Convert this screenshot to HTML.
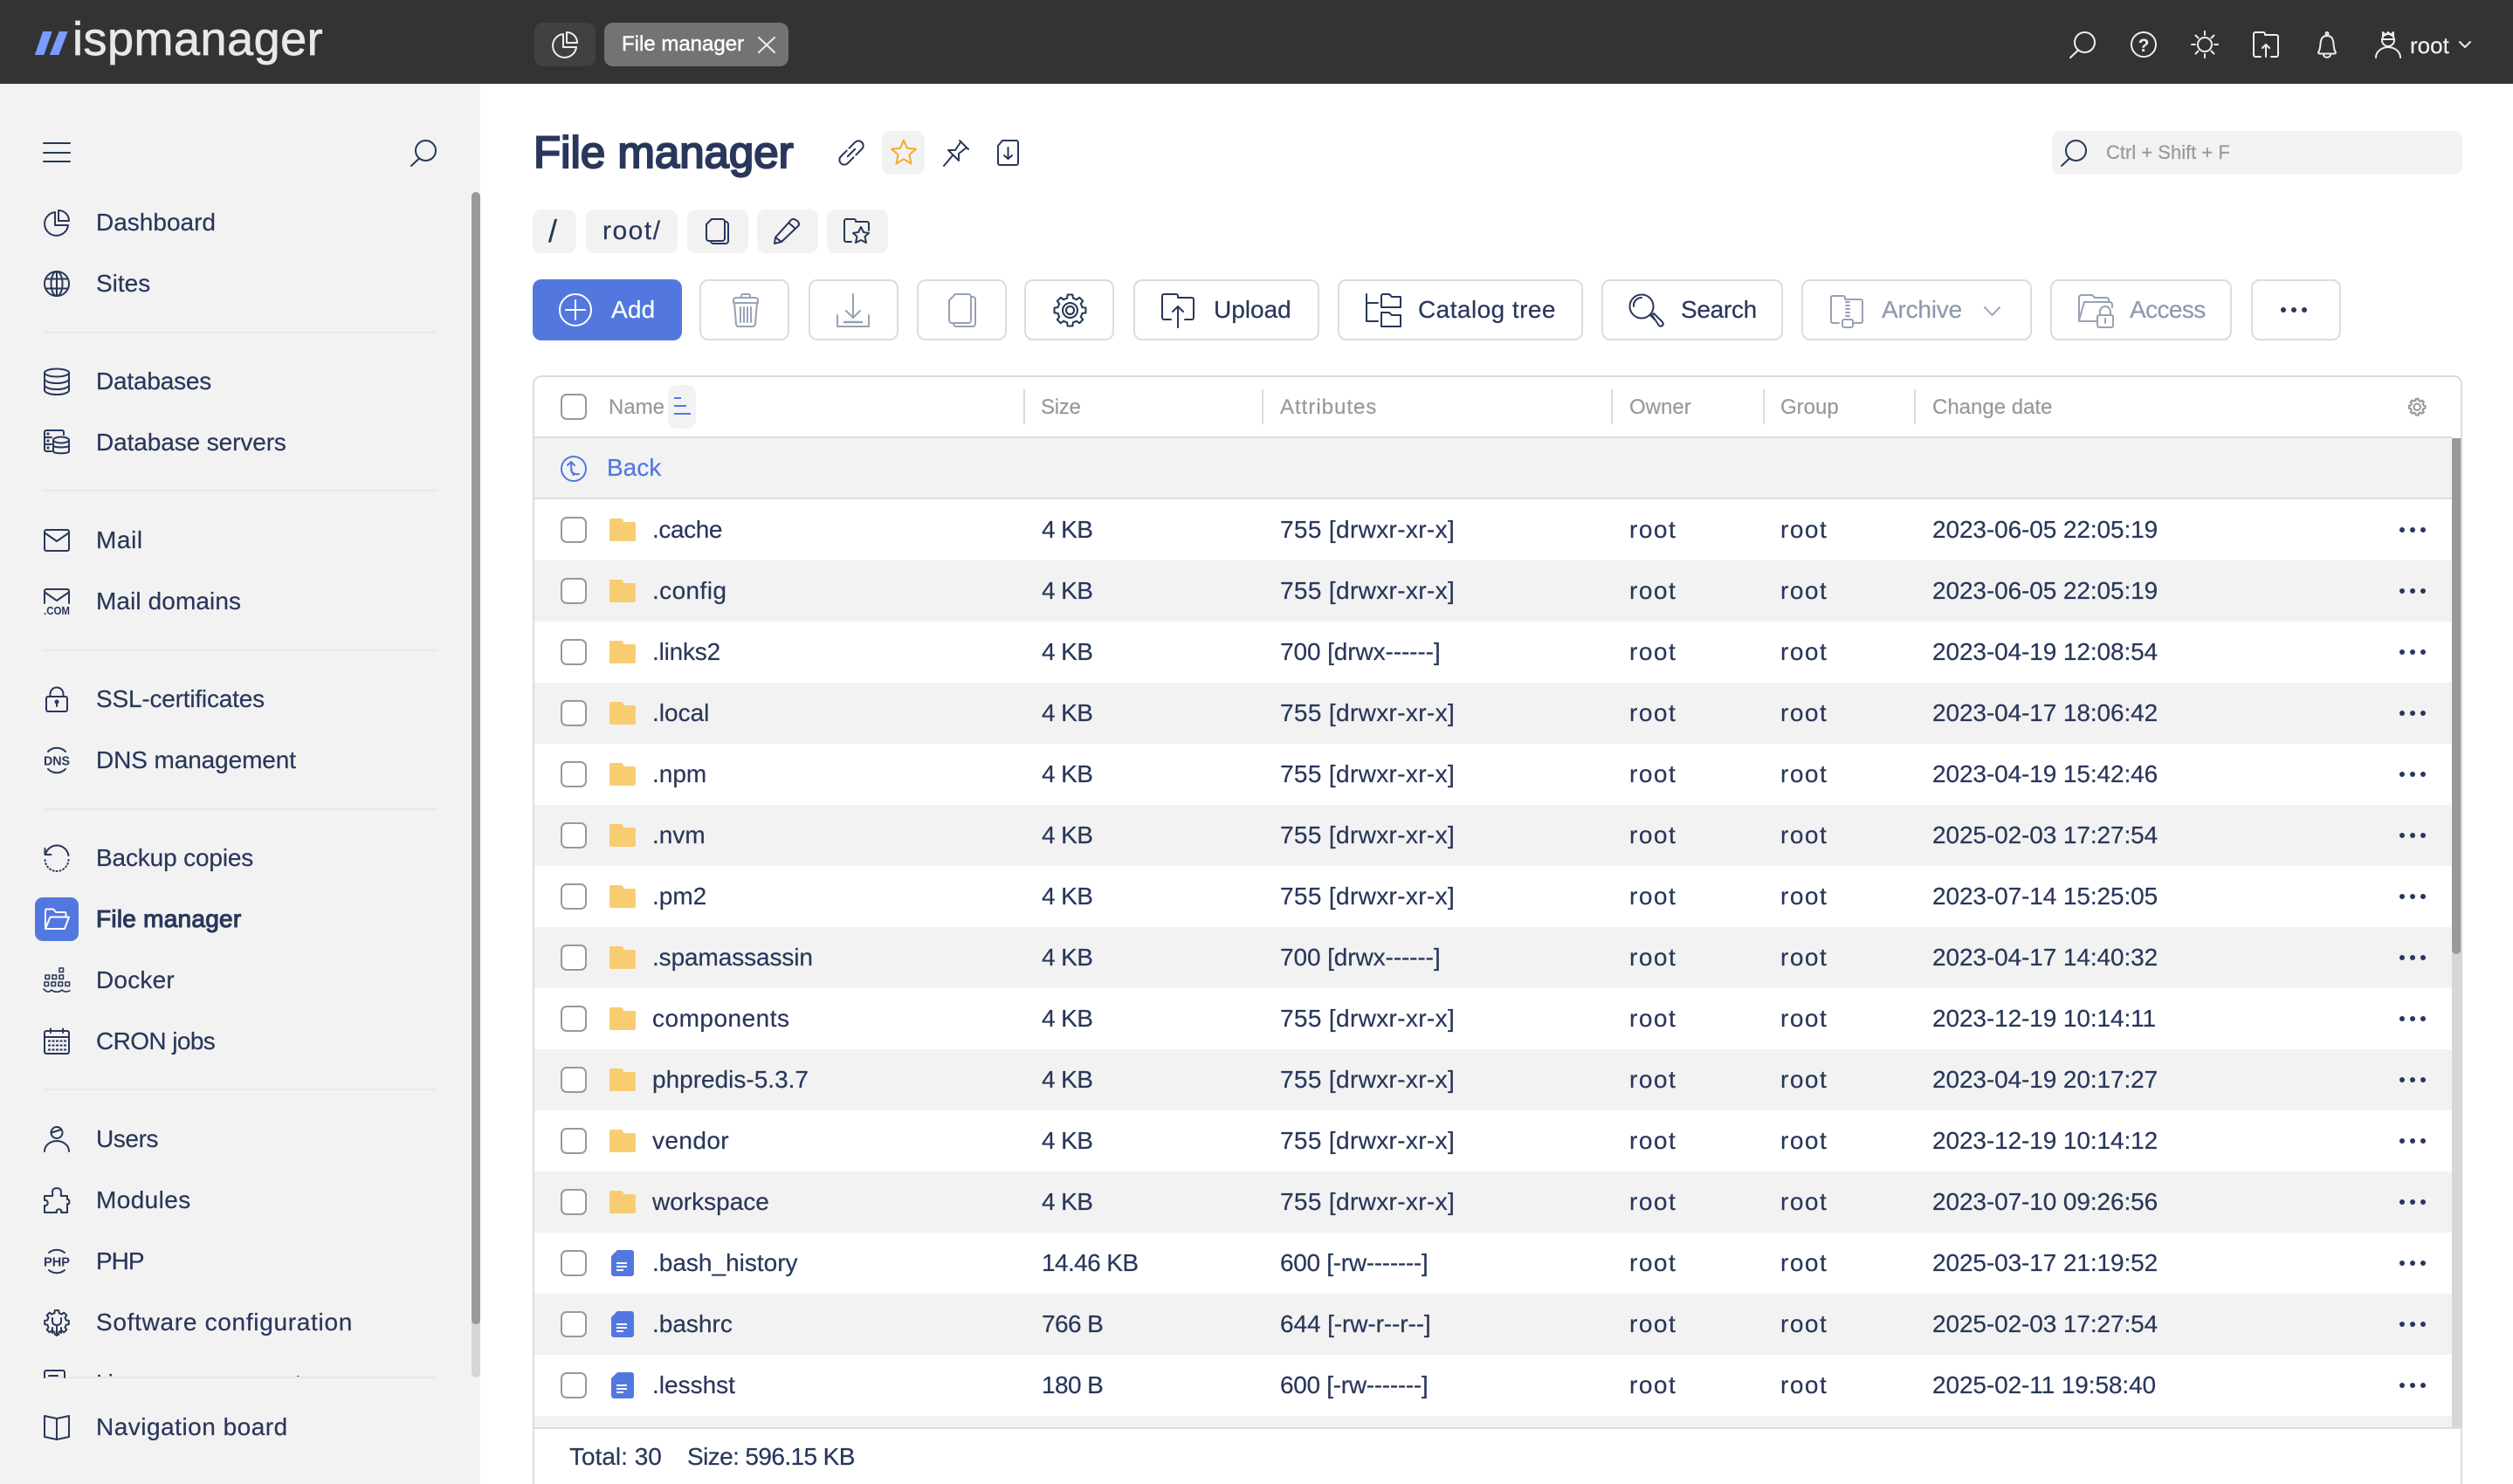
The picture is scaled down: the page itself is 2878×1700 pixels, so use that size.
<!DOCTYPE html>
<html lang="en">
<head>
<meta charset="utf-8">
<title>File manager - ispmanager</title>
<style>
html,body{margin:0;padding:0;width:2878px;height:1700px;overflow:hidden;background:#fff;font-family:"Liberation Sans",sans-serif;color:#29375b;font-size:28px}
body{position:relative;-webkit-text-stroke:.2px}
div{box-sizing:border-box}
.a{position:absolute}
.t{position:absolute;white-space:nowrap;line-height:40px;height:40px}
.tb{position:absolute;top:320px;height:70px;border:2px solid #dcdcdc;border-radius:10px;background:#fff}
.cr{position:absolute;top:240px;height:50px;background:#f2f2f2;border-radius:10px}
.dv{position:absolute;left:50px;width:450px;height:2px;background:#e8e8e8}
.sep{position:absolute;top:446px;width:2px;height:40px;background:#dcdcdc}
.th{font-size:24px;color:#999;top:447px}
.dis{color:#8f99ae}
.r{position:absolute;left:612px;width:2196px;height:70px}
.g{background:#f2f2f2}
.r span{position:absolute;top:15px;line-height:40px;white-space:nowrap}
.r span:nth-child(1){left:135px}
.r span:nth-child(2){left:581px;letter-spacing:-.6px}
.r span:nth-child(3){left:854px;letter-spacing:.35px}
.r span:nth-child(3).n{letter-spacing:-.1px}
.r span:nth-child(3).m{letter-spacing:-.3px}
.r span:nth-child(4){left:1254px;letter-spacing:1.5px}
.r span:nth-child(5){left:1427px;letter-spacing:1.5px}
.r span:nth-child(6){left:1601px;letter-spacing:-.1px}
#ic{position:absolute;left:0;top:0;fill:none;stroke:#29375b;stroke-width:2;stroke-linecap:round;stroke-linejoin:round}
#ic text{font-family:"Liberation Sans",sans-serif;stroke:none;fill:#29375b;font-weight:700;-webkit-text-stroke:0}
</style>
</head>
<body>
<!-- top bar -->
<div class="a" style="left:0;top:0;width:2878px;height:96px;background:#333"></div>
<div class="a" style="left:612px;top:26px;width:70px;height:50px;background:#414141;border-radius:10px"></div>
<div class="a" style="left:692px;top:26px;width:211px;height:50px;background:#737373;border-radius:10px"></div>

<!-- sidebar -->
<div class="a" style="left:0;top:96px;width:550px;height:1604px;background:#f2f2f2"></div>
<div class="a" style="left:540px;top:220px;width:10px;height:1358px;background:#d6d6d6;border-radius:5px"></div>
<div class="a" style="left:540px;top:220px;width:10px;height:1297px;background:#999;border-radius:5px"></div>
<div class="dv" style="top:380px"></div>
<div class="dv" style="top:561px"></div>
<div class="dv" style="top:744px"></div>
<div class="dv" style="top:926px"></div>
<div class="dv" style="top:1247px"></div>
<div class="dv" style="top:1577px"></div>
<div class="a" style="left:40px;top:1028px;width:50px;height:50px;background:#5278e0;border-radius:9px"></div>

<!-- title row -->
<div class="a" style="left:1010px;top:150px;width:49px;height:50px;background:#f2f2f2;border-radius:10px"></div>
<div class="a" style="left:2350px;top:150px;width:470px;height:50px;background:#f2f2f2;border-radius:10px"></div>

<!-- breadcrumb -->
<div class="cr" style="left:610px;width:50px"></div>
<div class="cr" style="left:671px;width:105px"></div>
<div class="cr" style="left:787px;width:70px"></div>
<div class="cr" style="left:867px;width:70px"></div>
<div class="cr" style="left:947px;width:70px"></div>

<!-- toolbar -->
<div class="a" style="left:610px;top:320px;width:171px;height:70px;background:#5278e0;border-radius:10px"></div>
<div class="tb" style="left:801px;width:103px"></div>
<div class="tb" style="left:926px;width:103px"></div>
<div class="tb" style="left:1050px;width:103px"></div>
<div class="tb" style="left:1173px;width:103px"></div>
<div class="tb" style="left:1298px;width:213px"></div>
<div class="tb" style="left:1532px;width:281px"></div>
<div class="tb" style="left:1834px;width:208px"></div>
<div class="tb" style="left:2063px;width:264px"></div>
<div class="tb" style="left:2348px;width:208px"></div>
<div class="tb" style="left:2578px;width:103px"></div>

<!-- table -->
<div class="a" style="left:610px;top:430px;width:2210px;height:1270px;border:2px solid #dcdcdc;border-bottom:0;border-radius:10px 10px 0 0;background:#fff"></div>
<div class="a" style="left:765px;top:441px;width:32px;height:50px;background:#f2f2f2;border-radius:10px"></div>
<div class="sep" style="left:1172px"></div>
<div class="sep" style="left:1445px"></div>
<div class="sep" style="left:1845px"></div>
<div class="sep" style="left:2019px"></div>
<div class="sep" style="left:2192px"></div>
<div class="a" style="left:612px;top:500px;width:2196px;height:2px;background:#dcdcdc"></div>
<div class="a g" style="left:612px;top:502px;width:2196px;height:68px"></div>
<div class="a" style="left:612px;top:570px;width:2196px;height:2px;background:#dcdcdc"></div>

<div class="r" style="top:572px"><span style="letter-spacing:-.4px">.cache</span><span>4 KB</span><span>755 [drwxr-xr-x]</span><span>root</span><span>root</span><span>2023-06-05 22:05:19</span></div>
<div class="r g" style="top:642px"><span style="letter-spacing:.4px">.config</span><span>4 KB</span><span>755 [drwxr-xr-x]</span><span>root</span><span>root</span><span>2023-06-05 22:05:19</span></div>
<div class="r" style="top:712px"><span style="letter-spacing:-.2px">.links2</span><span>4 KB</span><span class="n">700 [drwx------]</span><span>root</span><span>root</span><span>2023-04-19 12:08:54</span></div>
<div class="r g" style="top:782px"><span>.local</span><span>4 KB</span><span>755 [drwxr-xr-x]</span><span>root</span><span>root</span><span>2023-04-17 18:06:42</span></div>
<div class="r" style="top:852px"><span>.npm</span><span>4 KB</span><span>755 [drwxr-xr-x]</span><span>root</span><span>root</span><span>2023-04-19 15:42:46</span></div>
<div class="r g" style="top:922px"><span>.nvm</span><span>4 KB</span><span>755 [drwxr-xr-x]</span><span>root</span><span>root</span><span>2025-02-03 17:27:54</span></div>
<div class="r" style="top:992px"><span>.pm2</span><span>4 KB</span><span>755 [drwxr-xr-x]</span><span>root</span><span>root</span><span>2023-07-14 15:25:05</span></div>
<div class="r g" style="top:1062px"><span style="letter-spacing:-.1px">.spamassassin</span><span>4 KB</span><span class="n">700 [drwx------]</span><span>root</span><span>root</span><span>2023-04-17 14:40:32</span></div>
<div class="r" style="top:1132px"><span style="letter-spacing:.5px">components</span><span>4 KB</span><span>755 [drwxr-xr-x]</span><span>root</span><span>root</span><span>2023-12-19 10:14:11</span></div>
<div class="r g" style="top:1202px"><span>phpredis-5.3.7</span><span>4 KB</span><span>755 [drwxr-xr-x]</span><span>root</span><span>root</span><span>2023-04-19 20:17:27</span></div>
<div class="r" style="top:1272px"><span style="letter-spacing:.4px">vendor</span><span>4 KB</span><span>755 [drwxr-xr-x]</span><span>root</span><span>root</span><span>2023-12-19 10:14:12</span></div>
<div class="r g" style="top:1342px"><span>workspace</span><span>4 KB</span><span>755 [drwxr-xr-x]</span><span>root</span><span>root</span><span>2023-07-10 09:26:56</span></div>
<div class="r" style="top:1412px"><span>.bash_history</span><span>14.46 KB</span><span class="m">600 [-rw-------]</span><span>root</span><span>root</span><span>2025-03-17 21:19:52</span></div>
<div class="r g" style="top:1482px"><span>.bashrc</span><span>766 B</span><span class="n">644 [-rw-r--r--]</span><span>root</span><span>root</span><span>2025-02-03 17:27:54</span></div>
<div class="r" style="top:1552px"><span>.lesshst</span><span>180 B</span><span class="m">600 [-rw-------]</span><span>root</span><span>root</span><span>2025-02-11 19:58:40</span></div>
<div class="a g" style="left:612px;top:1622px;width:2196px;height:13px"></div>
<div class="a" style="left:612px;top:1635px;width:2206px;height:2px;background:#dcdcdc"></div>
<div class="a" style="left:2808px;top:502px;width:12px;height:1133px;background:#d6d6d6"></div>
<div class="a" style="left:2808px;top:502px;width:10px;height:591px;background:#999;border-radius:0 0 5px 5px"></div>

<!-- all icons -->
<svg id="ic" width="2878" height="1700" viewBox="0 0 2878 1700" xmlns="http://www.w3.org/2000/svg">
<defs>
<path id="th" d="M12.34 4.33L12.81 1.17H17.19L17.66 4.33A11 11 0 0 1 20.67 5.57"/>
<g id="gear"><use href="#th"/><use href="#th" transform="rotate(45 15 15)"/><use href="#th" transform="rotate(90 15 15)"/><use href="#th" transform="rotate(135 15 15)"/><use href="#th" transform="rotate(180 15 15)"/><use href="#th" transform="rotate(225 15 15)"/><use href="#th" transform="rotate(270 15 15)"/><use href="#th" transform="rotate(315 15 15)"/></g>
<rect id="cb" x="1" y="1" width="28" height="28" rx="6" fill="#fff" stroke="#999" stroke-width="2"/>
<path id="fo" fill="#f8cd72" stroke="none" d="M2 0H13a3 3 0 0 1 3 3V4H28a2 2 0 0 1 2 2V24a2 2 0 0 1-2 2H2a2 2 0 0 1-2-2V2A2 2 0 0 1 2 0Z"/>
<g id="fi"><path fill="#5278e0" stroke="none" d="M7 0H23a3 3 0 0 1 3 3V27a3 3 0 0 1-3 3H3a3 3 0 0 1-3-3V7Z"/><path stroke="#fff" stroke-width="2" stroke-linecap="butt" d="M6 15H18M6 19H18M6 23H14"/></g>
<g id="dt" fill="#29375b" stroke="none"><circle cx="3" cy="0" r="3"/><circle cx="15" cy="0" r="3"/><circle cx="27" cy="0" r="3"/></g>
<g id="mg"><circle cx="17.5" cy="12.5" r="11.5"/><path d="M10 21.5L1 30"/></g>
<g id="pie"><path d="M13 3A13.5 13.5 0 1 0 28 18H13Z"/><path d="M17 1V13H29A12 12 0 0 0 17 1Z"/></g>
</defs>

<!-- logo -->
<path fill="#7b9cff" stroke="#7b9cff" stroke-width="1" d="M49.500 36.500H59L50 62.500H40.500ZM68 36.500H77L67 62.500H57.500Z"/>

<!-- top tabs / top-right icons -->
<use href="#pie" x="632" y="36" stroke="#eee"/>
<path stroke="#eee" d="M869 43L887 60M887 43L869 60"/>
<use href="#mg" x="2370" y="36" stroke="#eee"/>
<g transform="translate(2440 36)" stroke="#eee"><circle cx="15" cy="15" r="14"/><text x="15" y="23" font-size="21" text-anchor="middle" style="fill:#eee">?</text></g>
<g transform="translate(2510 36)" stroke="#eee"><circle cx="15" cy="15" r="8"/><path d="M15 0V4M15 26V30M0 15H4M26 15H30M4.500 4.500L7.500 7.500M22.500 22.500L25.500 25.500M25.500 4.500L22.500 7.500M7.500 22.500L4.500 25.500"/></g>
<g transform="translate(2580 36)" stroke="#eee"><path d="M9 29H3a2 2 0 0 1-2-2V3a2 2 0 0 1 2-2H12a2 2 0 0 1 2 2V4H27a2 2 0 0 1 2 2V27a2 2 0 0 1-2 2H21"/><path d="M15 29V15M11 19L15 15L19 19"/></g>
<g transform="translate(2654 36)" stroke="#eee"><path d="M1 24C4 20 3 14 4 11C5 6 8 5 11 5C14 5 17 6 18 11C19 14 18 20 21 24C21 25 20 25.500 19 25.500H3C2 25.500 1 25 1 24Z"/><circle cx="11" cy="2.500" r="1.500"/><path d="M7 26C7 31 15 31 15 26"/></g>
<g transform="translate(2720 36)" stroke="#eee"><path d="M1 30A14 12 0 0 1 29 30"/><circle cx="15" cy="10" r="7"/><path d="M8 9H22M9 6L9 1L12 4L15 1L18 4L21 1L21 6"/></g>
<path stroke="#eee" d="M2817 48L2823 54L2829 48"/>

<!-- sidebar controls -->
<path d="M50 164H80M50 175H80M50 185H80"/>
<use href="#mg" x="470" y="160"/>

<!-- nav icons -->
<use href="#pie" x="50" y="240"/>
<g transform="translate(50 310)"><circle cx="15" cy="15" r="14"/><ellipse cx="15" cy="15" rx="6.500" ry="14"/><path d="M15 1V29M2.500 9.500H27.500M2.500 20.500H27.500"/></g>
<g transform="translate(50 422)"><ellipse cx="15" cy="5" rx="14" ry="4.500"/><path d="M1 5V25C1 28 8 30 15 30S29 28 29 25V5M1 12C1 15 8 17 15 17S29 15 29 12M1 19C1 22 8 24 15 24S29 22 29 19"/></g>
<g transform="translate(50 492)"><path d="M9 25H3a2 2 0 0 1-2-2V3a2 2 0 0 1 2-2H21a2 2 0 0 1 2 2V6M1 9H9M1 17H9"/><circle cx="5" cy="5" r=".6"/><circle cx="5" cy="13" r=".6"/><circle cx="5" cy="21" r=".6"/><ellipse cx="20" cy="12" rx="9" ry="3.500"/><path d="M11 12V25C11 28 29 28 29 25V12M11 18.500C11 21 29 21 29 18.500"/></g>
<g transform="translate(50 606)"><rect x="1" y="1" width="28" height="24" rx="2"/><path d="M2 5L15 14L28 5"/></g>
<g transform="translate(50 674)"><path d="M1 17V3a2 2 0 0 1 2-2H27a2 2 0 0 1 2 2V17M2 5L15 14L28 5"/><text x="0" y="30" font-size="13" textLength="30" lengthAdjust="spacingAndGlyphs">.COM</text></g>
<g transform="translate(50 786)"><rect x="3" y="12" width="24" height="17" rx="2"/><path d="M7.500 12V9a7.500 7.500 0 0 1 15 0V12"/><circle cx="15" cy="18" r="1.500" fill="#29375b"/><path d="M15 19V23"/></g>
<g transform="translate(50 856)"><path d="M5 5A14 14 0 0 1 25 5M5 25A14 14 0 0 0 25 25"/><text x="0" y="20.500" font-size="15" textLength="30" lengthAdjust="spacingAndGlyphs">DNS</text></g>
<g transform="translate(50 968)"><path d="M2 11A13.500 13.500 0 0 1 28.500 12"/><path stroke-dasharray="1 3" d="M28.500 17A13.500 13.500 0 0 1 1.500 16"/><path d="M1.500 4V11H8.500"/></g>
<g transform="translate(50 1038)" stroke="#fff"><path d="M2 24V5a1.500 1.500 0 0 1 1.500-1.500H11L14 7H24a1.500 1.500 0 0 1 1.500 1.500V12"/><path d="M2 26L7.500 12.500H29L24 26Z"/></g>
<g transform="translate(50 1108)" stroke-width="1.600"><rect x="18" y="1" width="4.500" height="4.500"/><rect x="2" y="9" width="4.500" height="4.500"/><rect x="10" y="9" width="4.500" height="4.500"/><rect x="18" y="9" width="4.500" height="4.500"/><rect x="1" y="17" width="4.500" height="4.500"/><rect x="9" y="17" width="4.500" height="4.500"/><rect x="17" y="17" width="4.500" height="4.500"/><rect x="25" y="17" width="4.500" height="4.500"/><path d="M0 25C4 29 6 29 9 26C12 29 18 29 21 26C24 29 27 28 30 27"/></g>
<g transform="translate(50 1178)"><rect x="1" y="3" width="28" height="26" rx="2"/><path d="M1 10H29M8 0.500V5M22 0.500V5"/><path stroke-dasharray="3 1.500" stroke-linecap="butt" d="M5 14.500H26M5 19.500H26M5 24.500H26"/></g>
<g transform="translate(50 1290)"><circle cx="15" cy="7.500" r="6.500"/><path d="M9 7.500L20 4M1 29A14 12 0 0 1 29 29"/></g>
<g transform="translate(50 1360)"><path d="M1 10H10C11 8 9 7 10.500 3C12 0.500 18 0.500 19.500 3C21 7 19 8 20 10H27V14C30 13 30.500 21 27 19V29H20C22 24 13 24 15 29H1V21C6 22 6 14 1 15Z"/></g>
<g transform="translate(50 1430)"><path d="M6 5A14 14 0 0 1 24 5M6 25A14 14 0 0 0 24 25"/><text x="0" y="20.500" font-size="14.500" textLength="30" lengthAdjust="spacingAndGlyphs">PHP</text></g>
<g transform="translate(50 1500)"><use href="#gear"/><path d="M10 10V14C10 17 13 18 15 18C17 18 20 17 20 14V10M15 18V30M10 21V27M20 21V27"/></g>
<path d="M51 1578V1572a2 2 0 0 1 2-2H72a2 2 0 0 1 2 2V1578M56 1576H66"/>
<g transform="translate(50 1620)"><path d="M1 2L15 5L29 2V26L15 29L1 26ZM15 5V29"/></g>

<!-- title icons -->
<g transform="translate(960 160)"><g transform="rotate(-45 15 15)"><path d="M13 9.500H3.500a5.500 5.500 0 0 0 0 11H13"/><path d="M17 9.500H26.500a5.500 5.500 0 0 1 0 11H17"/><path d="M9 15H21"/></g></g>
<path stroke="#f5a92e" d="M1035 160.500L1039 169.800L1049 170.800L1041.400 177.300L1043.600 187.500L1035 182.200L1026.400 187.500L1028.600 177.300L1021 170.800L1031 169.800Z"/>
<g transform="translate(1080 160)"><path d="M1 30L11 18M19 1L29 11M20 3L14 12L6 12L18 24L18 16L27 9"/></g>
<g transform="translate(1142 160)"><path d="M6 1H22a2 2 0 0 1 2 2V27a2 2 0 0 1-2 2H3a2 2 0 0 1-2-2V7ZM12.500 9V22M8 18L12.500 22L17 18"/></g>
<use href="#mg" x="2360" y="160"/>

<!-- breadcrumb icons -->
<g transform="translate(808 250)"><path d="M7 1H19a3 3 0 0 1 3 3V23a3 3 0 0 1-3 3H4a3 3 0 0 1-3-3V7Z"/><path d="M22 4H23a3 3 0 0 1 3 3V26a3 3 0 0 1-3 3H9a3 3 0 0 1-3-3"/></g>
<g transform="translate(886 250)"><path d="M2 22L20 2C22 0 24 1 27 3C29 5 30 7 28 9L9 27L1 29ZM2 22L9 27M17 5L25 12"/></g>
<g transform="translate(966 250)"><path d="M9 27H3a2 2 0 0 1-2-2V3a2 2 0 0 1 2-2H12a2 2 0 0 1 2 2V4H27a2 2 0 0 1 2 2V14"/><path d="M20 10L23 16L29 17L24.500 21L26 28L20 25L14 28L15.500 21L11 17L17 16Z"/></g>

<!-- toolbar icons -->
<g stroke="#fff" transform="translate(640 336)"><circle cx="19" cy="19" r="18"/><path d="M19 8V30M8 19H30"/></g>
<g stroke="#97a1b5" transform="translate(838 336)"><path d="M2 11V8a3 3 0 0 1 3-3H27a3 3 0 0 1 3 3V11ZM11 5V3a2 2 0 0 1 2-2H19a2 2 0 0 1 2 2V5M3 11L5 35a3 3 0 0 0 3 3H24a3 3 0 0 0 3-3L29 11M10 16V33M14 16V33M18 16V33M22 16V33"/></g>
<g stroke="#97a1b5" transform="translate(958 336)"><path d="M19 1V28M11 20L19 28L27 20M1 25V38H37V25"/><path d="M9 33H29" stroke-width="2.500"/></g>
<g stroke="#97a1b5" transform="translate(1086 336)"><path d="M8 1H23a3 3 0 0 1 3 3V31a3 3 0 0 1-3 3H4a3 3 0 0 1-3-3V8Z"/><path d="M26 4H28a3 3 0 0 1 3 3V35a3 3 0 0 1-3 3H9a3 3 0 0 1-3-3"/></g>
<g transform="translate(1206 336) scale(1.300)" stroke-width="1.600"><use href="#gear"/><circle cx="15" cy="15" r="6.500"/><circle cx="15" cy="15" r="3.500"/></g>
<g transform="translate(1330 336)"><path d="M11 30H3a2 2 0 0 1-2-2V3a2 2 0 0 1 2-2H17a2 2 0 0 1 2 2V5H35a2 2 0 0 1 2 2V28a2 2 0 0 1-2 2H27"/><path d="M19 39V15M13 21L19 15L25 21"/></g>
<g transform="translate(1564 336)"><path d="M1 1V32H14M1 11H14"/><path d="M18 15V3a2 2 0 0 1 2-2H27l3 3H40V16H18ZM18 38V22H27l3 3H40V38Z" stroke-width="2"/></g>
<g transform="translate(1866 336)"><circle cx="14" cy="15" r="13.500"/><path d="M5 15A9 9 0 0 1 14 5"/><path d="M24 25L29 30M26 25L28 23L38 33C40 36 37 39 34 37Z"/></g>
<g stroke="#97a1b5" transform="translate(2096 338)"><path d="M10 32H3a2 2 0 0 1-2-2V3a2 2 0 0 1 2-2H15a2 2 0 0 1 2 2V5H35a2 2 0 0 1 2 2V30a2 2 0 0 1-2 2H26"/><path d="M18 8H22M18 12H22M18 16H22M18 20H22M18 24H22"/><rect x="14" y="28" width="12" height="9" rx="2"/></g>
<path stroke="#97a1b5" d="M2273 352L2281.500 361L2290 352"/>
<g stroke="#97a1b5" transform="translate(2380 336)"><path d="M1 30V5a3 3 0 0 1 3-3H16l3 3H32a3 3 0 0 1 3 3V9M7 10H36a3 3 0 0 1 3 3V16M1 31L7 10M1 32H20"/><rect x="22" y="25" width="18" height="14" rx="2"/><path d="M25 25V21a6 6 0 0 1 12 0V25M31 29V34"/></g>
<use href="#dt" x="2612" y="355"/>

<!-- table header -->
<use href="#cb" x="642" y="451"/>
<path stroke="#5278e0" stroke-linecap="butt" d="M772 456H780M772 465H786M772 474H791"/>
<g transform="translate(2758 456) scale(.68)" stroke="#999" stroke-width="3"><use href="#gear"/><circle cx="15" cy="15" r="5.500"/></g>
<g stroke="#5278e0" transform="translate(642 522)"><circle cx="15" cy="15" r="14"/><path d="M15 22C13 20 12 17 12 7M8 11L12 7L16 11M12 15C12 20 17 22 21 21"/></g>

<!-- rows -->
<use href="#cb" x="642" y="592"/><use href="#fo" x="698" y="594"/><use href="#dt" x="2748" y="607"/>
<use href="#cb" x="642" y="662"/><use href="#fo" x="698" y="664"/><use href="#dt" x="2748" y="677"/>
<use href="#cb" x="642" y="732"/><use href="#fo" x="698" y="734"/><use href="#dt" x="2748" y="747"/>
<use href="#cb" x="642" y="802"/><use href="#fo" x="698" y="804"/><use href="#dt" x="2748" y="817"/>
<use href="#cb" x="642" y="872"/><use href="#fo" x="698" y="874"/><use href="#dt" x="2748" y="887"/>
<use href="#cb" x="642" y="942"/><use href="#fo" x="698" y="944"/><use href="#dt" x="2748" y="957"/>
<use href="#cb" x="642" y="1012"/><use href="#fo" x="698" y="1014"/><use href="#dt" x="2748" y="1027"/>
<use href="#cb" x="642" y="1082"/><use href="#fo" x="698" y="1084"/><use href="#dt" x="2748" y="1097"/>
<use href="#cb" x="642" y="1152"/><use href="#fo" x="698" y="1154"/><use href="#dt" x="2748" y="1167"/>
<use href="#cb" x="642" y="1222"/><use href="#fo" x="698" y="1224"/><use href="#dt" x="2748" y="1237"/>
<use href="#cb" x="642" y="1292"/><use href="#fo" x="698" y="1294"/><use href="#dt" x="2748" y="1307"/>
<use href="#cb" x="642" y="1362"/><use href="#fo" x="698" y="1364"/><use href="#dt" x="2748" y="1377"/>
<use href="#cb" x="642" y="1432"/><use href="#fi" x="700" y="1432"/><use href="#dt" x="2748" y="1447"/>
<use href="#cb" x="642" y="1502"/><use href="#fi" x="700" y="1502"/><use href="#dt" x="2748" y="1517"/>
<use href="#cb" x="642" y="1572"/><use href="#fi" x="700" y="1572"/><use href="#dt" x="2748" y="1587"/>
</svg>

<!-- top bar text -->
<div class="t" style="left:83px;top:15px;height:60px;line-height:60px;font-size:54px;letter-spacing:.5px;color:#e8e8e8;-webkit-text-stroke:.7px">ispmanager</div>
<div class="t" style="left:712px;top:31px;font-size:24px;color:#fff;-webkit-text-stroke:.4px #fff">File manager</div>
<div class="t" style="left:2760px;top:32px;font-size:26px;color:#f0f0f0">root</div>

<!-- nav text -->
<div class="t" style="left:110px;top:235px">Dashboard</div>
<div class="t" style="left:110px;top:305px">Sites</div>
<div class="t" style="left:110px;top:417px;letter-spacing:-.2px">Databases</div>
<div class="t" style="left:110px;top:487px;letter-spacing:-.1px">Database servers</div>
<div class="t" style="left:110px;top:599px;letter-spacing:.6px">Mail</div>
<div class="t" style="left:110px;top:669px;letter-spacing:.1px">Mail domains</div>
<div class="t" style="left:110px;top:781px;letter-spacing:-.2px">SSL-certificates</div>
<div class="t" style="left:110px;top:851px;letter-spacing:-.1px">DNS management</div>
<div class="t" style="left:110px;top:963px;letter-spacing:-.15px">Backup copies</div>
<div class="t" style="left:110px;top:1033px;letter-spacing:.25px;-webkit-text-stroke:1.1px">File manager</div>
<div class="t" style="left:110px;top:1103px;letter-spacing:.2px">Docker</div>
<div class="t" style="left:110px;top:1173px;letter-spacing:-.6px">CRON jobs</div>
<div class="t" style="left:110px;top:1285px;letter-spacing:-.4px">Users</div>
<div class="t" style="left:110px;top:1355px;letter-spacing:.4px">Modules</div>
<div class="t" style="left:110px;top:1425px;letter-spacing:-1px">PHP</div>
<div class="t" style="left:110px;top:1495px;letter-spacing:.7px">Software configuration</div>
<div class="a" style="left:100px;top:1560px;width:400px;height:17px;overflow:hidden"><div class="t" style="left:10px;top:5px;letter-spacing:-1.9px">License management</div></div>
<div class="t" style="left:110px;top:1615px;letter-spacing:.5px">Navigation board</div>

<!-- title, search, breadcrumb -->
<div class="t" style="left:611px;top:140px;height:70px;line-height:70px;font-size:51px;-webkit-text-stroke:2.2px">File manager</div>
<div class="t" style="left:2412px;top:155px;font-size:22px;color:#999">Ctrl + Shift + F</div>
<div class="t" style="left:628px;top:245px;font-size:36px">/</div>
<div class="t" style="left:690px;top:245px;font-size:30px;letter-spacing:1.5px">root/</div>

<!-- toolbar text -->
<div class="t" style="left:700px;top:335px;color:#fff;letter-spacing:.2px">Add</div>
<div class="t" style="left:1390px;top:335px">Upload</div>
<div class="t" style="left:1624px;top:335px;letter-spacing:.45px">Catalog tree</div>
<div class="t" style="left:1925px;top:335px;letter-spacing:-.3px">Search</div>
<div class="t dis" style="left:2155px;top:335px;letter-spacing:-.2px">Archive</div>
<div class="t dis" style="left:2439px;top:335px;letter-spacing:-.6px">Access</div>

<!-- table header text -->
<div class="t th" style="left:697px">Name</div>
<div class="t th" style="left:1192px;letter-spacing:-.3px">Size</div>
<div class="t th" style="left:1466px;letter-spacing:1px">Attributes</div>
<div class="t th" style="left:1866px">Owner</div>
<div class="t th" style="left:2039px">Group</div>
<div class="t th" style="left:2213px">Change date</div>
<div class="t" style="left:695px;top:516px;color:#5278e0">Back</div>

<!-- footer -->
<div class="t" style="left:652px;top:1649px">Total: 30</div>
<div class="t" style="left:787px;top:1649px;letter-spacing:-.6px">Size: 596.15 KB</div>
</body>
</html>
